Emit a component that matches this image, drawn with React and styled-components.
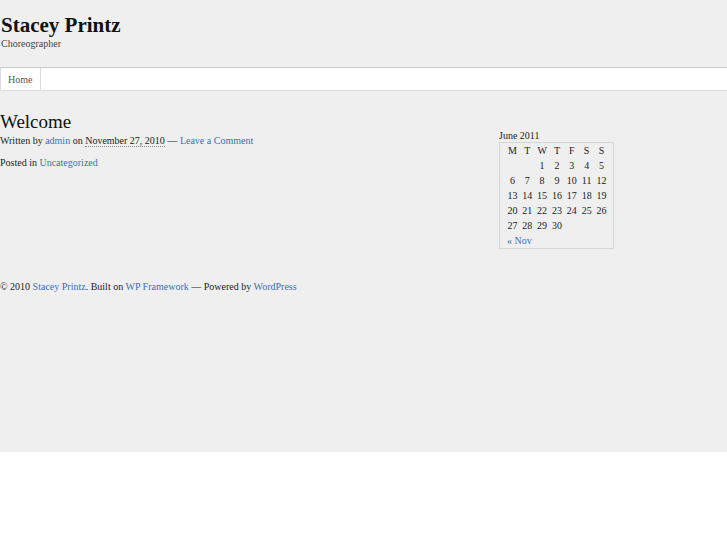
import styled, { createGlobalStyle } from "styled-components";

const GlobalStyle = createGlobalStyle`
  html, body { margin: 0; padding: 0; background: #ffffff; }
  body { font-family: "Liberation Serif", "Times New Roman", serif; color: #222; }
  a { color: #3b6fb6; text-decoration: none; }
`;

const Page = styled.div`
  background: #efefef;
  height: 452px;
  overflow: hidden;
`;

const Header = styled.header`
  padding: 13px 0 0 1px;
  height: 55px;
  box-sizing: border-box;
`;

const SiteTitle = styled.h1`
  margin: 0;
  font-size: 21px;
  line-height: 25px;
  font-weight: bold;
  color: #111;
`;

const Tagline = styled.div`
  font-size: 10px;
  line-height: 12px;
  color: #444;
`;

const Nav = styled.nav`
  margin-top: 12px;
  display: flex;
  background: #fff;
  border-top: 1px solid #c8c8c8;
  border-bottom: 1px solid #dcdcdc;
  border-left: 1px solid #dcdcdc;
  height: 22px;
`;

const NavItem = styled.a`
  display: flex;
  align-items: center;
  padding: 0 8px 0 7px;
  font-size: 10px;
  color: #555;
  border-right: 1px solid #dcdcdc;
`;

const Body = styled.div`
  display: flex;
  padding-top: 19px;
  height: 189px;
  box-sizing: border-box;
`;

const Content = styled.main`
  width: 499px;
`;

const PostTitle = styled.h2`
  margin: 0;
  font-size: 19px;
  line-height: 23px;
  font-weight: normal;
  color: #111;
`;

const Meta = styled.p`
  margin: ${(p) => p.$top || 0}px 0 0;
  font-size: 10px;
  line-height: 14px;
  color: #222;
`;

const DateText = styled.span`
  border-bottom: 1px dotted #888;
`;

const Sidebar = styled.aside`
  padding-top: 19px;
`;

const Caption = styled.div`
  font-size: 10px;
  line-height: 13px;
  color: #222;
`;

const Calendar = styled.table`
  border: 1px solid #d6d6d6;
  border-collapse: separate;
  border-spacing: 0;
  padding: 0 4px 0 5px;
  width: 115px;
  font-size: 10px;
  color: #222;
  th, td {
    padding: 0;
    width: 15px;
    height: 15px;
    text-align: center;
    font-weight: normal;
  }
  tfoot td {
    text-align: left;
    padding-left: 2px;
  }
`;

const Footer = styled.footer`
  font-size: 10px;
  line-height: 14px;
  color: #222;
`;

const weeks = [
  ["", "", "1", "2", "3", "4", "5"],
  ["6", "7", "8", "9", "10", "11", "12"],
  ["13", "14", "15", "16", "17", "18", "19"],
  ["20", "21", "22", "23", "24", "25", "26"],
  ["27", "28", "29", "30", "", "", ""],
];

export default function App() {
  return (
    <>
      <GlobalStyle />
      <Page>
        <Header>
          <SiteTitle>Stacey Printz</SiteTitle>
          <Tagline>Choreographer</Tagline>
        </Header>
        <Nav>
          <NavItem href="#">Home</NavItem>
        </Nav>
        <Body>
          <Content>
            <PostTitle>Welcome</PostTitle>
            <Meta $top={1}>
              Written by <a href="#">admin</a> on{" "}
              <DateText>November 27, 2010</DateText> — <a href="#">Leave a Comment</a>
            </Meta>
            <Meta $top={8}>
              Posted in <a href="#">Uncategorized</a>
            </Meta>
          </Content>
          <Sidebar>
            <Caption>June 2011</Caption>
            <Calendar>
              <thead>
                <tr>
                  {["M", "T", "W", "T", "F", "S", "S"].map((d, i) => (
                    <th key={i}>{d}</th>
                  ))}
                </tr>
              </thead>
              <tbody>
                {weeks.map((w, i) => (
                  <tr key={i}>
                    {w.map((d, j) => (
                      <td key={j}>{d}</td>
                    ))}
                  </tr>
                ))}
              </tbody>
              <tfoot>
                <tr>
                  <td colSpan={7}>
                    <a href="#">« Nov</a>
                  </td>
                </tr>
              </tfoot>
            </Calendar>
          </Sidebar>
        </Body>
        <Footer>
          © 2010 <a href="#">Stacey Printz</a>. Built on <a href="#">WP Framework</a> — Powered by{" "}
          <a href="#">WordPress</a>
        </Footer>
      </Page>
    </>
  );
}
